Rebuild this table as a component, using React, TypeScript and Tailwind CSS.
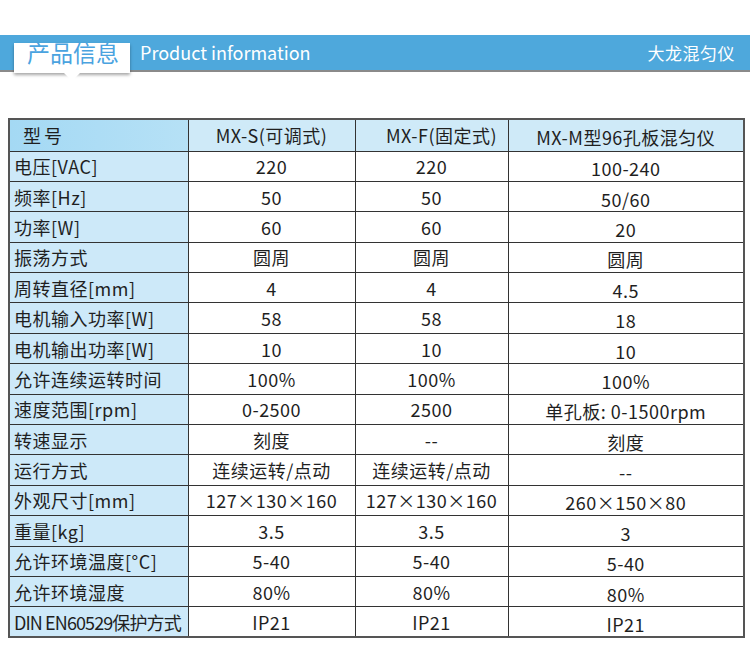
const rows: [string, string, string, string][] = [
  ['电压[VAC]', '220', '220', '100-240'],
  ['频率[Hz]', '50', '50', '50/60'],
  ['功率[W]', '60', '60', '20'],
  ['振荡方式', '圆周', '圆周', '圆周'],
  ['周转直径[mm]', '4', '4', '4.5'],
  ['电机输入功率[W]', '58', '58', '18'],
  ['电机输出功率[W]', '10', '10', '10'],
  ['允许连续运转时间', '100%', '100%', '100%'],
  ['速度范围[rpm]', '0-2500', '2500', '单孔板: 0-1500rpm'],
  ['转速显示', '刻度', '--', '刻度'],
  ['运行方式', '连续运转/点动', '连续运转/点动', '--'],
  ['外观尺寸[mm]', '127×130×160', '127×130×160', '260×150×80'],
  ['重量[kg]', '3.5', '3.5', '3'],
  ['允许环境温度[°C]', '5-40', '5-40', '5-40'],
  ['允许环境湿度', '80%', '80%', '80%'],
  ['DIN EN60529保护方式', 'IP21', 'IP21', 'IP21'],
];

export default function App() {
  return (
    <div className="w-[750px] h-[648px] bg-white text-[#1f1f1f] font-['Noto_Sans_CJK_SC',sans-serif] overflow-hidden">
      <div className="h-[35px]" />
      <div className="relative h-[35px] bg-[#4ea8dc] shadow-[0_2px_0_#8a8a8a] flex items-center">
        <div className="relative ml-[14px] mt-[11px] h-[30px] w-[116px] bg-white shadow-[0_2px_3px_rgba(0,0,0,0.35)] flex items-center justify-center text-[23px] leading-none text-[#4aa3df]">
          <span className="-mt-[11px] ml-[2px]">产品信息</span>
          <div className="absolute left-[50px] -bottom-[8px] w-0 h-0 border-l-[8px] border-r-[8px] border-t-[8px] border-l-transparent border-r-transparent border-t-white" />
        </div>
        <div className="ml-[10px] text-[18px] text-white">Product information</div>
        <div className="ml-auto mr-[15px] text-[17px] tracking-[0.5px] text-white">大龙混匀仪</div>
      </div>
      <div className="h-[48px]" />
      <table className="ml-[8px] border-collapse border-2 border-[#555] text-[18px] tracking-[0.5px] leading-none">
        <colgroup>
          <col className="w-[179px]" />
          <col className="w-[167px]" />
          <col className="w-[153px]" />
          <col className="w-[236px]" />
        </colgroup>
        <thead>
          <tr className="h-[32px] bg-[#cfeaf8]">
            <th className="border border-[#333] bg-gradient-to-r from-[#a4d9f4] to-[#b6e1f6] text-left font-normal pl-[13px] tracking-[3px]">型号</th>
            <th className="border border-[#333] font-normal">MX-S(可调式)</th>
            <th className="border border-[#333] font-normal pl-[20px]">MX-F(固定式)</th>
            <th className="border border-[#333] font-normal pt-[3px]">MX-M型96孔板混匀仪</th>
          </tr>
        </thead>
        <tbody>
          {rows.map((r, i) => (
            <tr key={r[0]} className="h-[30.4px]">
              <td
                className={
                  i === rows.length - 1
                    ? 'border border-[#333] bg-[#cde9f9] pl-[4px] whitespace-nowrap tracking-[-0.9px]'
                    : 'border border-[#333] bg-[#cde9f9] pl-[4px] whitespace-nowrap'
                }
              >
                {r[0]}
              </td>
              <td className="border border-[#333] text-center">{r[1]}</td>
              <td className="border border-[#333] text-center">{r[2]}</td>
              <td className="border border-[#333] text-center pt-[4px]">{r[3]}</td>
            </tr>
          ))}
        </tbody>
      </table>
    </div>
  );
}
